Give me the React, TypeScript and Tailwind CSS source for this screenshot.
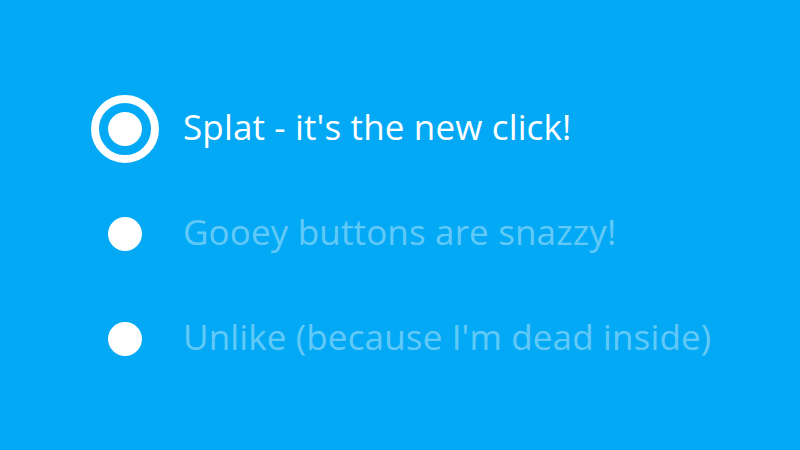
import React, { useState } from "react";

const options = [
  "Splat - it's the new click!",
  "Gooey buttons are snazzy!",
  "Unlike (because I'm dead inside)",
];

const App = () => {
  const [selected, setSelected] = useState(0);

  return (
    <div
      className="w-[800px] h-[450px] bg-[#03a9f4] pt-[76px] pl-[91px]"
      style={{ fontFamily: '"Open Sans", "DejaVu Sans", sans-serif' }}
    >
      {options.map((label, i) => (
        <button
          key={label}
          onClick={() => setSelected(i)}
          className="flex h-[105px] items-center gap-[24px] cursor-pointer"
        >
          <div className="flex w-[68px] h-[68px] items-center justify-center">
            {selected === i ? (
              <div className="flex w-[68px] h-[68px] items-center justify-center rounded-full border-[8px] border-white">
                <div className="w-[34px] h-[34px] rounded-full bg-white" />
              </div>
            ) : (
              <div className="w-[34px] h-[34px] rounded-full bg-white" />
            )}
          </div>
          <span
            className={
              selected === i
                ? "pb-[4px] text-[35px] leading-none tracking-[0.15px] text-white"
                : "pb-[4px] text-[35px] leading-none tracking-[0.15px] text-white/40"
            }
          >
            {label}
          </span>
        </button>
      ))}
    </div>
  );
};

export default App;
